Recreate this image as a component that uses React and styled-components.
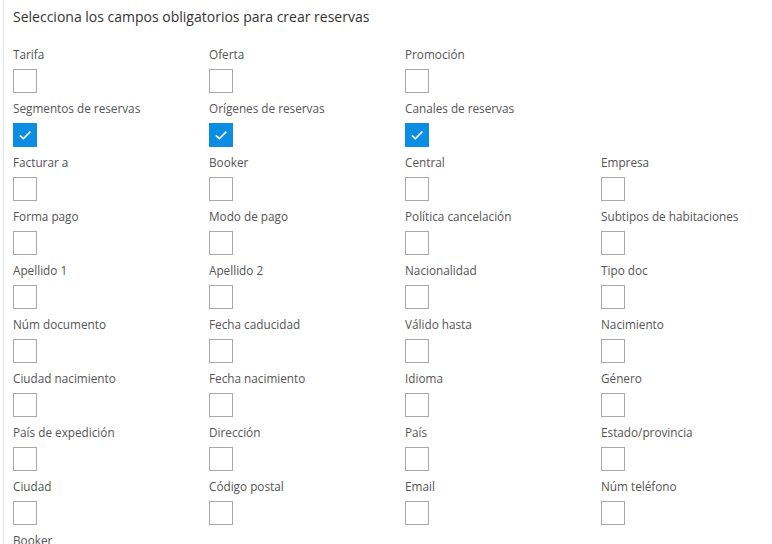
import React, { useState } from 'react';
import styled, { createGlobalStyle } from 'styled-components';

const GlobalStyle = createGlobalStyle`
  html, body {
    margin: 0;
    padding: 0;
    background: #ffffff;
  }
  body {
    font-family: "Open Sans", "Liberation Sans", sans-serif;
  }
`;

const Page = styled.div`
  padding-left: 3px;
  height: 544px;
  overflow: hidden;
`;

const Panel = styled.div`
  border-left: 1px solid #e4e8ee;
  padding: 6px 10px 0 9px;
  min-height: 544px;
  box-sizing: border-box;
`;

const Title = styled.h2`
  margin: 0 0 17px;
  font-size: 14px;
  font-weight: 400;
  line-height: 22px;
  color: #333333;
`;

const Row = styled.div`
  display: grid;
  grid-template-columns: repeat(4, 196px);
`;

const Field = styled.label`
  display: flex;
  flex-direction: column;
  align-items: flex-start;
  height: 54px;
  cursor: pointer;
`;

const Label = styled.span`
  font-size: 11.75px;
  line-height: 18px;
  color: #555555;
  white-space: nowrap;
  margin-bottom: 6px;
`;

const Box = styled.span`
  width: 24px;
  height: 24px;
  box-sizing: border-box;
  display: flex;
  align-items: center;
  justify-content: center;
  border: 1px solid ${(p) => (p.$checked ? '#0a8de2' : '#a8a8a8')};
  background: ${(p) => (p.$checked ? '#0a8de2' : '#ffffff')};
`;

const rows = [
  ['Tarifa', 'Oferta', 'Promoción'],
  ['Segmentos de reservas', 'Orígenes de reservas', 'Canales de reservas'],
  ['Facturar a', 'Booker', 'Central', 'Empresa'],
  ['Forma pago', 'Modo de pago', 'Política cancelación', 'Subtipos de habitaciones'],
  ['Apellido 1', 'Apellido 2', 'Nacionalidad', 'Tipo doc'],
  ['Núm documento', 'Fecha caducidad', 'Válido hasta', 'Nacimiento'],
  ['Ciudad nacimiento', 'Fecha nacimiento', 'Idioma', 'Género'],
  ['País de expedición', 'Dirección', 'País', 'Estado/provincia'],
  ['Ciudad', 'Código postal', 'Email', 'Núm teléfono'],
  ['Booker'],
];

// keys are "row-column"
const initial = { '1-0': true, '1-1': true, '1-2': true };

const Check = () => (
  <svg width="14" height="12" viewBox="0 0 14 12">
    <path d="M1.8 6.4 L5.4 9.6 L12.4 2.6" fill="none" stroke="#ffffff" strokeWidth="1.6" />
  </svg>
);

const App = () => {
  const [checked, setChecked] = useState(initial);

  const toggle = (key) => setChecked((c) => ({ ...c, [key]: !c[key] }));

  return (
    <Page>
      <GlobalStyle />
      <Panel>
        <Title>Selecciona los campos obligatorios para crear reservas</Title>
        {rows.map((row, r) => (
          <Row key={r}>
            {row.map((name, i) => {
              const key = r + '-' + i;
              return (
                <Field key={key} onClick={() => toggle(key)}>
                  <Label>{name}</Label>
                  <Box $checked={!!checked[key]}>{checked[key] && <Check />}</Box>
                </Field>
              );
            })}
          </Row>
        ))}
      </Panel>
    </Page>
  );
};

export default App;
